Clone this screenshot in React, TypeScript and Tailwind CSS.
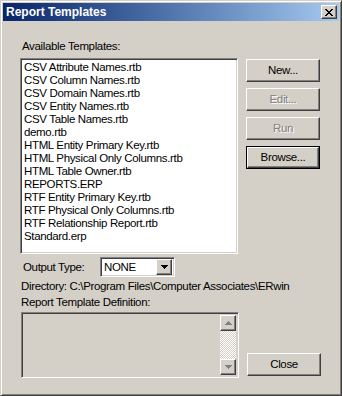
import React from "react";

const templates = [
  "CSV Attribute Names.rtb",
  "CSV Column Names.rtb",
  "CSV Domain Names.rtb",
  "CSV Entity Names.rtb",
  "CSV Table Names.rtb",
  "demo.rtb",
  "HTML Entity Primary Key.rtb",
  "HTML Physical Only Columns.rtb",
  "HTML Table Owner.rtb",
  "REPORTS.ERP",
  "RTF Entity Primary Key.rtb",
  "RTF Physical Only Columns.rtb",
  "RTF Relationship Report.rtb",
  "Standard.erp",
];

// classic raised 3d edge
const raised =
  "border-t border-l border-t-white border-l-white border-r border-b border-r-[#404040] border-b-[#404040] shadow-[inset_-1px_-1px_0_#808080]";
const sunken =
  "border-t border-l border-t-[#808080] border-l-[#808080] border-r border-b border-r-white border-b-white shadow-[inset_1px_1px_0_#404040,inset_-1px_-1px_0_#d4d0c8]";

function Btn({ label, disabled, isDefault }: { label: string; disabled?: boolean; isDefault?: boolean }) {
  const inner = (
    <div
      className={`flex h-full w-full items-center justify-center ${raised} ${
        disabled ? "text-[#808080] [text-shadow:1px_1px_0_#fff]" : "text-black"
      }`}
    >
      {label}
    </div>
  );
  if (isDefault) {
    return <div className="h-[23px] w-[74px] border border-black bg-[#d4d0c8]">{inner}</div>;
  }
  return <div className="h-[23px] w-[74px] bg-[#d4d0c8]">{inner}</div>;
}

function Arrow({ up }: { up?: boolean }) {
  return (
    <div className={`flex h-[16px] w-[16px] items-center justify-center bg-[#d4d0c8] ${raised}`}>
      <svg width="7" height="4" viewBox="0 0 7 4">
        {up ? (
          <path d="M3 0h1v1h1v1h1v1h1v1H0V3h1V2h1V1h1z" fill="#808080" />
        ) : (
          <path d="M0 0h7v1H6v1H5v1H4v1H3V3H2V2H1V1H0z" fill="#808080" />
        )}
      </svg>
    </div>
  );
}

export default function App() {
  return (
    <div
      className="relative h-[396px] w-[342px] overflow-hidden bg-[#d4d0c8] text-[11.5px] leading-[13px] tracking-[-0.35px] text-black border-t border-l border-t-[#d4d0c8] border-l-[#d4d0c8] border-r border-b border-r-[#404040] border-b-[#404040] shadow-[inset_1px_1px_0_#fff,inset_-1px_-1px_0_#808080]"
      style={{ fontFamily: "'Liberation Sans', Arial, sans-serif" }}
    >
      {/* Title bar */}
      <div className="mx-[2px] mt-[2px] flex h-[18px] items-center justify-between bg-linear-to-r from-[#0a246a] to-[#a6caf0] pl-[3px] pr-[2px]">
        <span className="font-bold text-white text-[12px] tracking-normal">Report Templates</span>
        <div className={`flex h-[14px] w-[16px] items-center justify-center bg-[#d4d0c8] ${raised}`}>
          <svg width="8" height="7" viewBox="0 0 8 7">
            <path d="M0 0h2v1h1v1h2V1h1V0h2v1H7v1H6v1H5v1h1v1h1v1h1v1H6V6H5V5H3v1H2v1H0V6h1V5h1V4h1V3H2V2H1V1H0z" fill="#000" />
          </svg>
        </div>
      </div>

      <div className="flex pl-[19px] pt-[19px]">
        {/* left column */}
        <div className="flex w-[218px] flex-col">
          <div className="pl-[2px]">Available Templates:</div>
          <div className={`mt-[5px] h-[196px] w-[218px] bg-white pl-[3px] pt-[2px] ${sunken}`}>
            {templates.map((t) => (
              <div key={t} className="h-[13px] whitespace-nowrap">
                {t}
              </div>
            ))}
          </div>
          <div className="mt-[3px] flex items-center">
            <span className="w-[80px] pl-[3px]">Output Type:</span>
            <div className={`flex h-[20px] w-[75px] items-center justify-between bg-white pl-[3px] pr-[2px] ${sunken}`}>
              <span>NONE</span>
              <div className={`flex h-[16px] w-[16px] items-center justify-center bg-[#d4d0c8] ${raised}`}>
                <svg width="7" height="4" viewBox="0 0 7 4">
                  <path d="M0 0h7v1H6v1H5v1H4v1H3V3H2V2H1V1H0z" fill="#000" />
                </svg>
              </div>
            </div>
          </div>
        </div>

        {/* right column buttons */}
        <div className="ml-[8px] mt-[19px] flex flex-col gap-[6px]">
          <Btn label="New..." />
          <Btn label="Edit..." disabled />
          <Btn label="Run" disabled />
          <Btn label="Browse..." isDefault />
        </div>
      </div>

      <div className="mt-[3px] whitespace-nowrap pl-[20px]">Directory: C:\Program Files\Computer Associates\ERwin</div>
      <div className="mt-[3px] pl-[20px]">Report Template Definition:</div>

      <div className="mt-[3px] flex items-end pl-[20px]">
        <div className={`flex h-[66px] w-[218px] justify-end bg-[#d4d0c8] p-[2px] ${sunken}`}>
          <div className="flex w-[16px] flex-col">
            <Arrow up />
            <div className="flex-1 bg-[repeating-conic-gradient(#ffffff_0_25%,#d4d0c8_0_50%)] bg-[length:2px_2px]" />
            <Arrow />
          </div>
        </div>
        <div className="mb-[2px] ml-[8px]">
          <Btn label="Close" />
        </div>
      </div>
    </div>
  );
}
